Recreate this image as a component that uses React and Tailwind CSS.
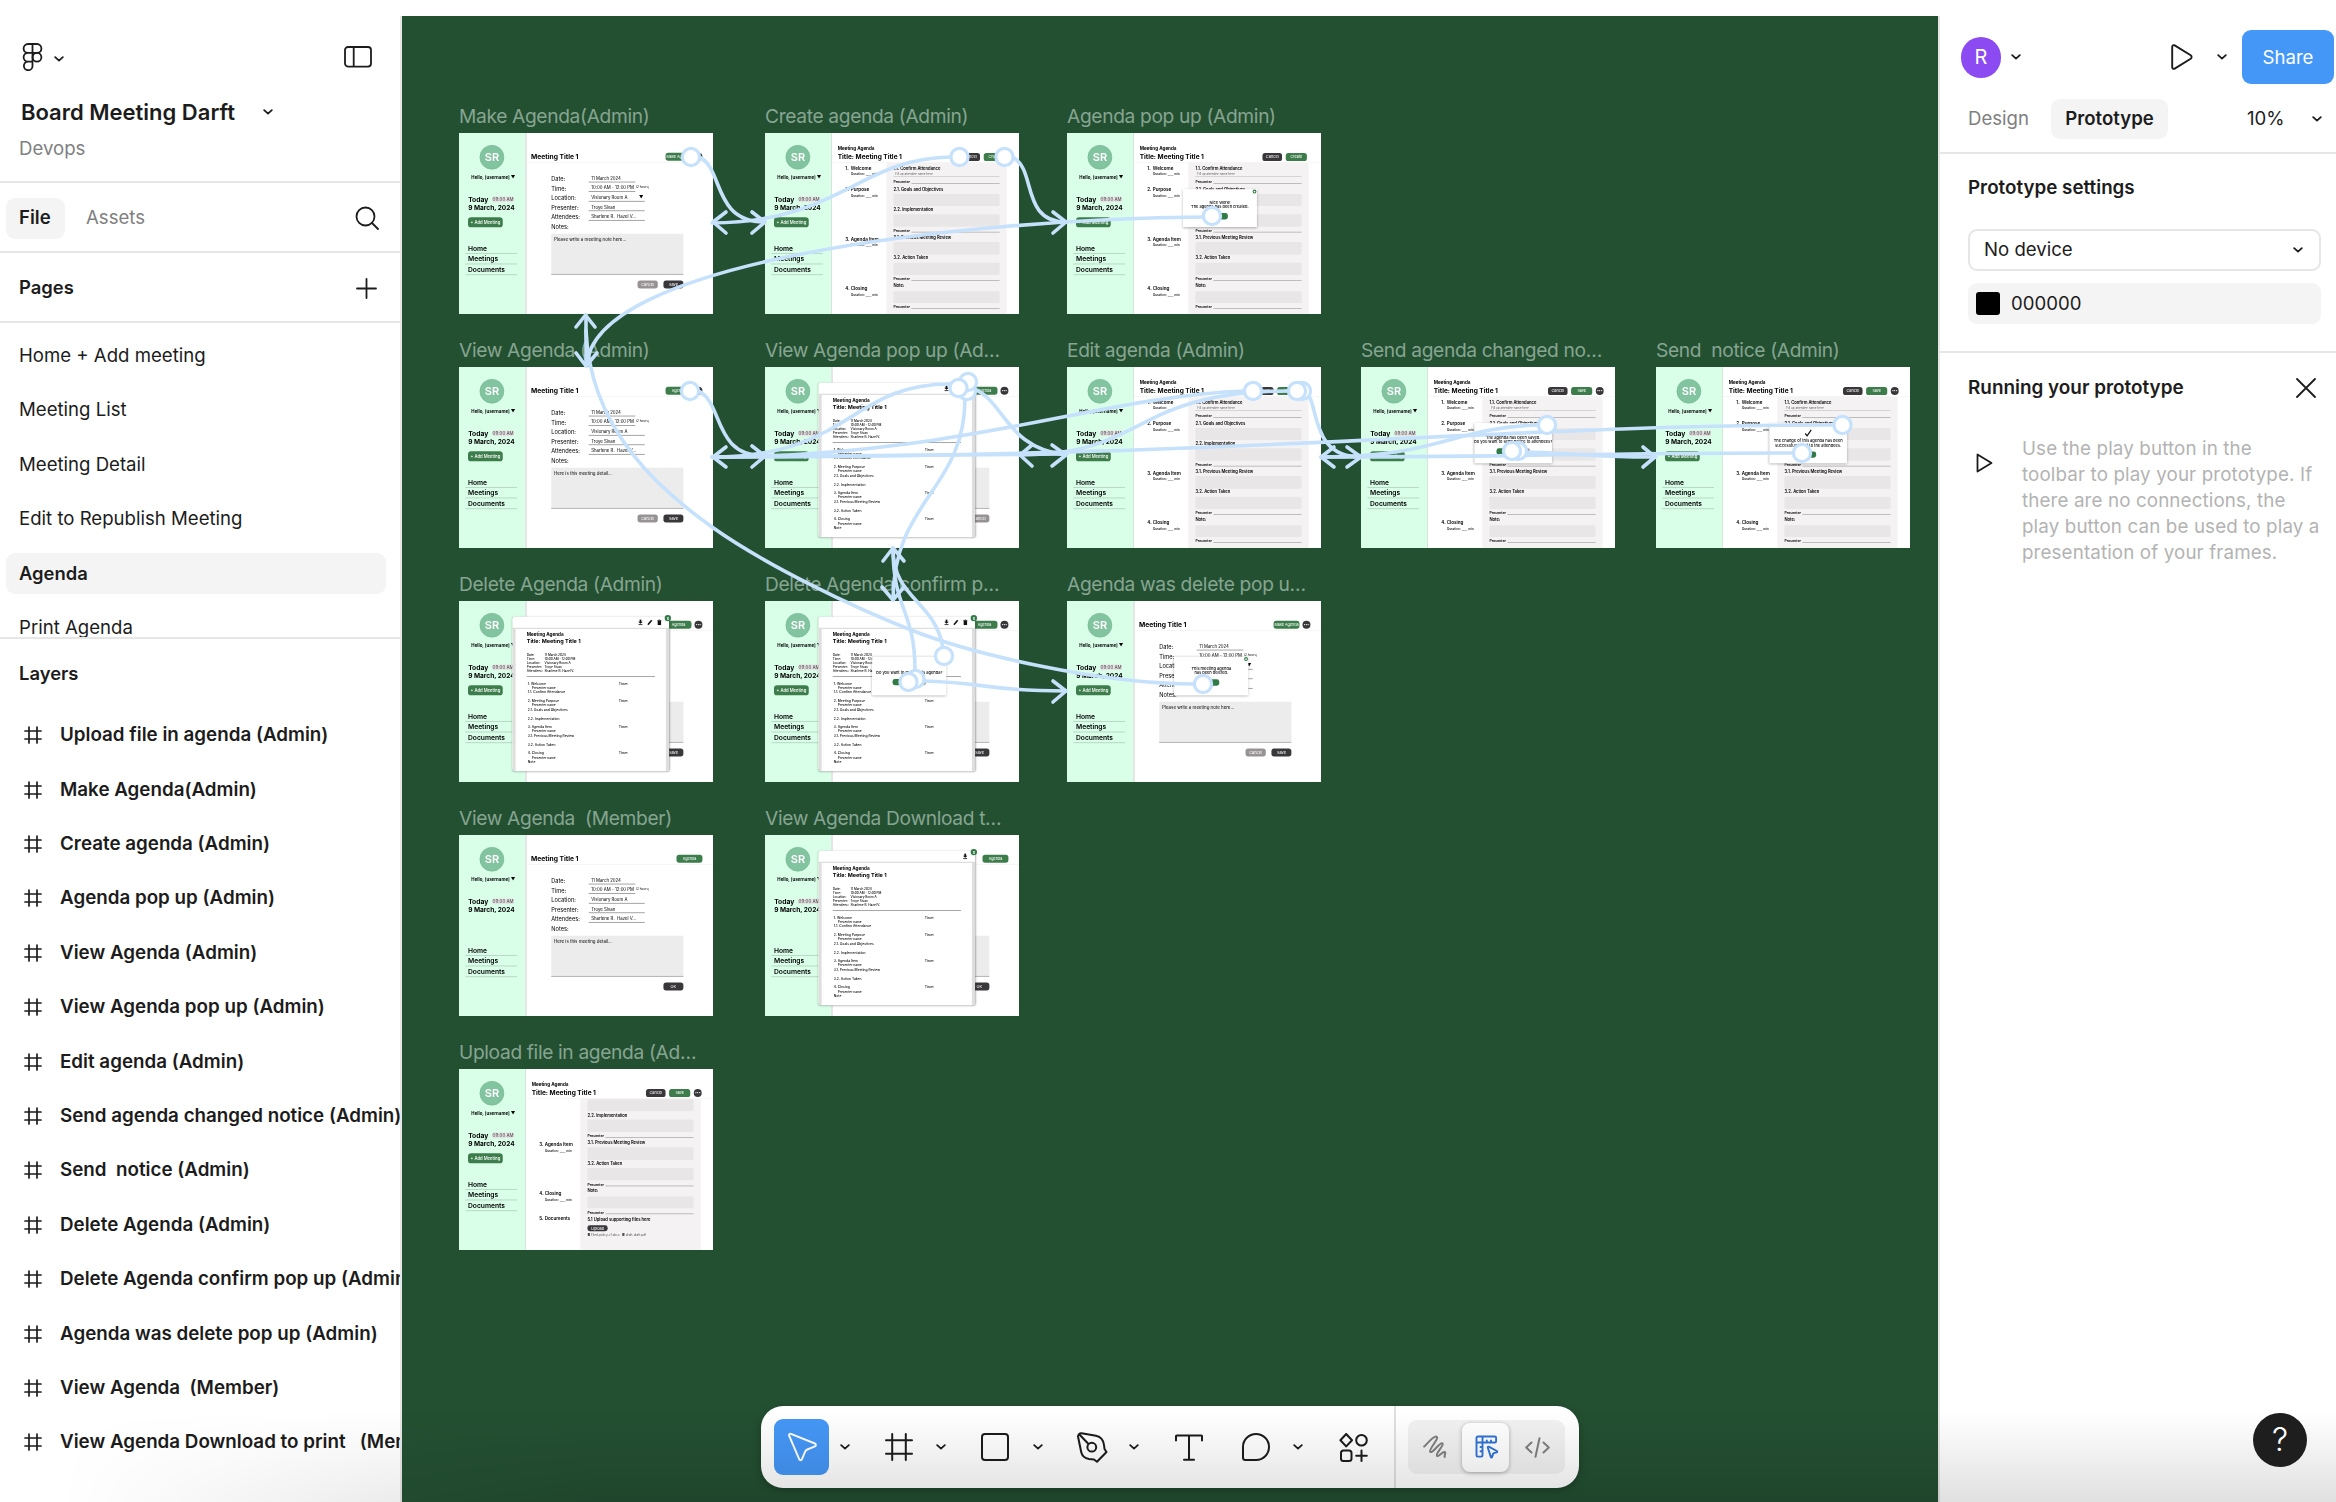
import React from "react";

function Chevron({ className = "" }) {
  return (
    <svg className={`h-[6px] w-[10px] shrink-0 ${className}`} viewBox="0 0 10 6" fill="none" stroke="currentColor" strokeWidth="1.8" strokeLinecap="round" strokeLinejoin="round">
      <path d="M1.2 1.2 5 4.6 8.8 1.2" />
    </svg>
  );
}

function FrameIcon({ className = "" }) {
  return (
    <svg className={className} viewBox="0 0 28 28" fill="none" stroke="currentColor" strokeWidth="2" strokeLinecap="round">
      <path d="M7.2 1v26M20.8 1v26M1 7.2h26M1 20.8h26" />
    </svg>
  );
}

function LayerIcon() {
  return (
    <svg className="h-[18px] w-[18px] shrink-0" viewBox="0 0 18 18" fill="none" stroke="currentColor" strokeWidth="1.7" strokeLinecap="round">
      <path d="M5 1v16M13 1v16M1 5h16M1 13h16" />
    </svg>
  );
}

/* ---------- Left panel ---------- */

const PAGES = ["Home + Add meeting", "Meeting List", "Meeting Detail", "Edit to Republish Meeting", "Agenda", "Print Agenda"];
const LAYERS = [
  "Upload file in agenda (Admin)",
  "Make Agenda(Admin)",
  "Create agenda (Admin)",
  "Agenda pop up (Admin)",
  "View Agenda (Admin)",
  "View Agenda pop up (Admin)",
  "Edit agenda (Admin)",
  "Send agenda changed notice (Admin)",
  "Send  notice (Admin)",
  "Delete Agenda (Admin)",
  "Delete Agenda confirm pop up (Admin)",
  "Agenda was delete pop up (Admin)",
  "View Agenda  (Member)",
  "View Agenda Download to print   (Member)",
];

function LeftPanel() {
  return (
    <aside className="flex w-[402px] shrink-0 flex-col overflow-hidden border-r-2 border-[#e6e6e6] bg-white">
      <header className="h-[167px] shrink-0 border-b-2 border-[#e6e6e6]">
        <div className="flex h-[81px] items-center pr-7 pl-[22px]">
          <svg className="h-[28px] w-[21px]" viewBox="0 0 21 28" fill="none" stroke="currentColor" strokeWidth="1.8">
            <path d="M10.5 1H6a4.4 4.4 0 0 0 0 8.8h4.5zM10.5 1H15a4.4 4.4 0 0 1 0 8.8h-4.5zM10.5 9.8H6a4.4 4.4 0 0 0 0 8.8h4.5zM6 18.6a4.3 4.3 0 1 0 4.5 4.3v-4.3z" />
            <circle cx="15" cy="14.2" r="4.4" />
          </svg>
          <Chevron className="mt-1 ml-[11px]" />
          <svg className="ml-auto h-[22px] w-[28px]" viewBox="0 0 28 22" fill="none" stroke="currentColor" strokeWidth="1.8">
            <rect x="1" y="1" width="26" height="19.6" rx="3" />
            <path d="M9.7 1v19.6" />
          </svg>
        </div>
        <div className="flex h-[30px] items-center pl-[21px]">
          <span className="w-[242px] text-[22px] font-semibold">Board Meeting Darft</span>
          <Chevron />
        </div>
        <div className="mt-[7px] pl-[19px] leading-[28px] text-[#808080]">Devops</div>
      </header>
      <div className="flex h-[70px] shrink-0 items-center border-b-2 border-[#e6e6e6] pt-[2px] pr-[21px] pl-[6px]">
        <span className="flex h-[41px] w-[59px] items-center rounded-[9px] bg-[#f4f4f4] pl-[13px] font-semibold">File</span>
        <span className="ml-[21px] text-[#808080]">Assets</span>
        <svg className="ml-auto h-[24px] w-[24px]" viewBox="0 0 24 24" fill="none" stroke="currentColor" strokeWidth="1.8" strokeLinecap="round">
          <circle cx="10.5" cy="10.5" r="9" />
          <path d="m17 17 6 6" />
        </svg>
      </div>
      <div className="flex h-[70px] shrink-0 items-center border-b-2 border-[#e6e6e6] pt-[2px] pr-[23px] pl-[19px]">
        <span className="text-[18.4px] font-semibold">Pages</span>
        <svg className="ml-auto h-[21px] w-[21px]" viewBox="0 0 21 21" fill="none" stroke="currentColor" strokeWidth="1.8" strokeLinecap="round">
          <path d="M10.5 1v19M1 10.5h19" />
        </svg>
      </div>
      <div className="h-[316px] shrink-0 overflow-hidden border-b-2 border-[#e6e6e6] pt-[6px] pl-[6px]">
        {PAGES.map((p) => (
          <div key={p} className="flex h-[54.3px] items-center">
            <div className={p === "Agenda" ? "flex h-[41px] w-[380px] items-center rounded-[9px] bg-[#f4f4f4] pl-[13px] text-[18.4px] font-semibold" : "flex h-[41px] w-[380px] items-center pl-[13px]"}>{p}</div>
          </div>
        ))}
      </div>
      <div className="flex h-[69px] shrink-0 items-center pl-[19px] text-[18.4px] font-semibold">Layers</div>
      <div className="flex-1 overflow-hidden">
        {LAYERS.map((l) => (
          <div key={l} className="flex h-[54.42px] items-center pl-[24px] text-[18.8px] font-semibold whitespace-pre">
            <LayerIcon />
            <span className="ml-[18px]">{l}</span>
          </div>
        ))}
      </div>
    </aside>
  );
}

/* ---------- Prototype frames, drawn at 1440 x 1024 ---------- */

const BTN = {
  green: "flex h-[45px] items-center justify-center rounded-[15px] bg-[#3d7d4b] text-[21px] text-white whitespace-nowrap",
  dark: "flex h-[45px] items-center justify-center rounded-[15px] bg-[#39373a] text-[22px] text-white",
  grey: "flex h-[45px] items-center justify-center rounded-[15px] bg-[#979394] text-[22px] text-white",
};

function Dot() {
  return <span className="flex h-[45px] w-[45px] items-center justify-center rounded-full bg-[#39373a] text-[22px] font-bold text-white">•••</span>;
}

function Side({ add = true }) {
  return (
    <div className="h-full w-[376px] shrink-0 bg-[#daffe9]">
      <div className="mt-[68px] ml-[117px] flex h-[139px] w-[139px] items-center justify-center rounded-full border-3 border-[#6fb48c] bg-[#83c4a0] text-[62px] font-semibold text-white">SR</div>
      <div className="mt-[26px] ml-[70px] h-[40px] text-[25px] leading-[40px] font-bold whitespace-nowrap">Hello, [username] ▼</div>
      <div className="mt-[80px] ml-[52px] flex h-[46px] items-center text-[38px] font-bold">
        Today
        <span className="ml-[22px] flex h-[32px] w-[124px] items-center justify-center rounded-[10px] bg-[#e4e4e4] text-[25px] font-medium text-[#5b5356]">09:00 AM</span>
      </div>
      <div className="ml-[52px] h-[46px] text-[37px] leading-[46px] font-bold whitespace-nowrap">9 March, 2024</div>
      <div className={add ? "mt-[33px] ml-[51px] flex h-[57px] w-[197px] items-center justify-center rounded-[18px] bg-[#3d7d4b] text-[24px] font-medium text-white" : "invisible mt-[33px] h-[57px]"}>+ Add Meeting</div>
      <div className="mt-[89px] ml-[36px] w-[293px]">
        {["Home", "Meetings", "Documents"].map((n) => (
          <div key={n} className="h-[60.5px] border-b-5 border-[#b3d3c0] pl-[15px] text-[38px] leading-[58px] font-semibold">{n}</div>
        ))}
      </div>
    </div>
  );
}

function Meeting({ add, button = "Agenda", dot = true, note = "Here is this meeting detail...", arrow = false, actions = "both" }) {
  const rows = [
    ["Date:", "11 March 2024"],
    ["Time:", "10:00 AM - 12:00 PM"],
    ["Location:", "Visionary Room A"],
    ["Presenter:", "Troye Sivan"],
    ["Attendees:", "Sharlene R.  Hazel V..."],
  ];
  return (
    <div className="flex h-full">
      <Side add={add} />
      <div className="flex-1 border-l-8 border-[#dcdcdc]">
        <div className="flex h-[170px] items-center border-b-3 border-[#f0f0f0] pt-[102px] pr-[60px] pl-[24px]">
          <span className="text-[38px] font-bold">Meeting Title 1</span>
          <span className={`${BTN.green} ml-auto w-[147px]`}>{button}</span>
          {dot && <span className="ml-[17px]"><Dot /></span>}
        </div>
        <div className="mt-[64px] ml-[139px] w-[749px]">
          {rows.map(([k, v], i) => (
            <div key={k} className="flex h-[54.3px] items-center">
              <span className="w-[212px] text-[32px]">{k}</span>
              <span className={i < 2 ? "mt-[2px] flex h-[36px] w-[265px] items-start border-b-4 border-[#808080] pl-[15px] text-[24.5px] leading-[26px] whitespace-pre" : "mt-[2px] flex h-[36px] w-[318px] items-start border-b-4 border-[#808080] pl-[15px] text-[24.5px] leading-[26px] whitespace-pre"}>
                {v}
                {arrow && i === 2 && <span className="mr-2 ml-auto">▼</span>}
              </span>
              {i === 1 && <span className="mb-[18px] ml-[3px] text-[17px]">(2 hours)</span>}
            </div>
          ))}
          <div className="h-[54px] text-[32px] leading-[54px]">Notes:</div>
          <div className="mt-[12px] h-[232px] border-b-4 border-[#999] bg-[#ececec] pt-[16px] pl-[16px] text-[25px]">{note}</div>
          <div className="mt-[33px] flex justify-end gap-[32px]">
            {actions === "both" ? (
              <>
                <span className={`${BTN.grey} w-[115px]`}>Cancel</span>
                <span className={`${BTN.dark} w-[113px]`}>Save</span>
              </>
            ) : (
              <span className={actions === "Cancel" ? `${BTN.grey} w-[115px]` : `${BTN.dark} w-[113px]`}>{actions}</span>
            )}
          </div>
        </div>
      </div>
    </div>
  );
}

function Presenter({ className }) {
  return (
    <div className={`flex h-[30px] items-end text-[20px] font-semibold ${className}`}>
      Presenter
      <span className="mb-[5px] ml-2 flex-1 border-b-4 border-[#a8a6a7]" />
    </div>
  );
}

function AgendaDoc({ save = false, upload = false }) {
  const item = (n, t, cls, sub = true) => (
    <div className={`ml-[75px] h-[76px] ${cls}`}>
      <div className="flex h-[40px] items-center text-[26px] font-semibold"><span className="w-[31px]">{n}.</span>{t}</div>
      {sub && <div className="ml-[32px] h-[36px] text-[18px] leading-[32px] font-medium whitespace-nowrap">Duration: ____ min</div>}
    </div>
  );
  const head = "h-[30px] text-[23.5px] leading-[30px] font-semibold whitespace-nowrap";
  return (
    <div className="flex h-full">
      <Side />
      <div className="flex h-full flex-1 flex-col border-l-4 border-[#cfd8d3]">
        <div className="flex h-[168px] shrink-0 items-end border-b-3 border-[#f0f0f0] pr-[64px] pb-[6px] pl-[32px]">
          <div className="font-bold whitespace-nowrap">
            <div className="h-[42px] text-[26px] leading-[38px]">Meeting Agenda</div>
            <div className="h-[46px] text-[37px] leading-[42px]">Title: Meeting Title 1</div>
          </div>
          <div className={save ? "ml-auto flex items-center gap-[20px]" : "mr-[16px] ml-auto flex items-center gap-[21px]"}>
            <span className={`${BTN.dark} w-[111px]`}>Cancel</span>
            <span className={`${BTN.green} w-[120px]`}>{save ? "Save" : "Create"}</span>
            {save && <Dot />}
          </div>
        </div>
        <div className="flex min-h-0 flex-1">
          <div className="w-[308px] overflow-hidden">
            <div className={upload ? "-mt-[174px] pt-px" : "pt-px"}>
              {item(1, "Welcome", "mt-[9px]")}
              {item(2, "Purpose", upload ? "invisible mt-[45px]" : "mt-[45px]")}
              {item(3, "Agenda Item", "mt-[206px]")}
              {item(4, "Closing", "mt-[203px]")}
              {upload && item(5, "Documents", "mt-[64px]", false)}
            </div>
          </div>
          <div className="w-[682px] overflow-hidden bg-[#f4f2f3] px-[40px]">
            <div className={upload ? "-mt-[174px] pt-px" : "pt-px"}>
              <div className={`${head} mt-[18px]`}>1.1. Confirm Attendance</div>
              <div className="mt-[2px] h-[30px] border-b-3 border-[#bbb] pl-[10px] text-[17px] text-[#666]">Fill up attendee name here</div>
              <Presenter className="mt-[15px]" />
              <div className={`${head} mt-[10px]`}>2.1. Goals and Objectives</div>
              <div className="mt-[12px] h-[68px] rounded-lg bg-[#e8e6e7]" />
              <div className={`${head} mt-[8px]`}>2.2. Implementation</div>
              <div className="mt-[9px] h-[70px] rounded-lg bg-[#e8e6e7]" />
              <Presenter className="mt-[8px]" />
              <div className={`${head} mt-[10px]`}>3.1. Previous Meeting Review</div>
              <div className="mt-[9px] h-[72px] rounded-lg bg-[#e8e6e7]" />
              <div className={`${head} mt-[4px]`}>3.2. Action Taken</div>
              <div className="mt-[11px] h-[70px] rounded-lg bg-[#e8e6e7]" />
              <Presenter className="mt-[9px]" />
              <div className={`${head} mt-[7px]`}>Note:</div>
              <div className="mt-[16px] h-[67px] rounded-lg bg-[#e8e6e7]" />
              <Presenter className="mt-[8px]" />
              {upload && (
                <>
                  <div className={`${head} mt-[8px]`}>5.1 Upload supporting files here</div>
                  <div className="mt-[20px] flex h-[34px] w-[115px] items-center justify-center rounded-[14px] bg-[#39373a] text-[22px] text-white">Upload</div>
                  <div className="mt-[10px] text-[17px] whitespace-pre text-[#555]">■ Filed-policy-v1.docx   ■ draft-draft.pdf</div>
                </>
              )}
            </div>
          </div>
        </div>
      </div>
    </div>
  );
}

/* [text, indented, has a time slot]; null is a blank line */
const PAPER_ROWS = [
  ["1. Welcome", false, true], ["Presenter name", true], ["1.1. Confirm Attendance"], null,
  ["2. Meeting Purpose", false, true], ["Presenter name", true], ["2.1. Goals and Objectives"], null,
  ["2.2. Implementation"], null,
  ["3. Agenda Item", false, true], ["Presenter name", true], ["3.1. Previous Meeting Review"], null,
  ["3.2. Action Taken"], null,
  ["4. Closing", false, true], ["Presenter name", true], ["Note"],
];

function Paper({ tools = 3 }) {
  const details = [
    ["Date:", "11 March 2024"], ["Time:", "10:00 AM - 12:00 PM"], ["Location:", "Visionary Room A"],
    ["Presenter:", "Troye Sivan"], ["Attendees:", "Sharlene R. Hazel V."],
  ];
  return (
    <div className="absolute top-[89px] left-[303px] h-[876px] w-[888px] rounded-[14px] bg-white shadow-[0_3px_10px_rgba(0,0,0,0.3)]">
      <div className="absolute -top-[10px] -right-[11px] flex h-[36px] w-[36px] items-center justify-center rounded-full bg-[#2f7a45] text-[22px] font-bold text-white">x</div>
      <div className="flex h-[68px] items-center justify-end gap-[24px] border-b-5 border-[#d0d0d0] pr-[42px]">
        <svg className="h-[34px] w-[28px]" viewBox="0 0 28 34"><path d="M9 1h10v12h8L14 25 1 13h8zM3 28h22v5H3z" fill="#111" /></svg>
        {tools === 3 && (
          <>
            <svg className="h-[34px] w-[32px]" viewBox="0 0 32 34"><path d="M1 33l3-9L22 3l7 5-19 22z" fill="#111" /></svg>
            <svg className="h-[34px] w-[26px]" viewBox="0 0 26 34"><path d="M1 4h24v4H1zM3 10h20v23H3zM9 1h8v3H9z" fill="#111" /></svg>
          </>
        )}
      </div>
      <div className="h-[808px] rounded-b-[14px] border-x-[19px] border-[#dedede] pt-[10px] pl-[62px]">
        <div className="h-[40px] text-[26px] leading-[40px] font-bold">Meeting Agenda</div>
        <div className="h-[40px] text-[31px] leading-[40px] font-bold">Title: Meeting Title 1</div>
        <div className="mt-[46px]">
          {details.map(([k, v]) => (
            <div key={k} className="flex h-[22.7px] items-center text-[17.5px] font-medium"><span className="w-[101px]">{k}</span>{v}</div>
          ))}
        </div>
        <div className="mt-[20px] w-[727px] border-b-5 border-[#999]" />
        <div className="mt-[25px] ml-[6px]">
          {PAPER_ROWS.map((r, i) => (
            <div key={i} className="flex h-[24.6px] items-center text-[19px] leading-none font-medium">
              {r && (
                <>
                  <span className={r[1] ? "w-[515px] pl-[22px] text-[18px]" : "w-[515px]"}>{r[0]}</span>
                  {r[2] && <span className="text-[20px]">Time:</span>}
                </>
              )}
            </div>
          ))}
        </div>
      </div>
    </div>
  );
}

function Popup({ className, lines, check = false, close = false, buttons = 1 }) {
  return (
    <div className={`absolute flex flex-col items-center justify-center bg-white text-[22.5px] leading-[24px] font-medium whitespace-nowrap shadow-[0_3px_14px_rgba(0,0,0,0.3)] ${className}`}>
      {close && <span className="absolute top-[2px] right-[2px] h-[22px] w-[22px] rounded-full border-6 border-[#2f7a45] bg-white" />}
      {check && (
        <svg className="mb-[10px] h-[46px] w-[46px]" viewBox="0 0 46 46" fill="none" stroke="#111" strokeWidth="7"><path d="M6 26l11 13L40 5" /></svg>
      )}
      {lines.map((l) => <div key={l}>{l}</div>)}
      <div className="mt-[24px] flex gap-[20px]">
        <span className="h-[36px] w-[90px] rounded-[14px] bg-[#2f7a45]" />
        {buttons === 2 && <span className="h-[36px] w-[80px] rounded-[14px] bg-[#979394]" />}
      </div>
    </div>
  );
}

const FRAMES = [
  { at: "left-[57px] top-[117px]", name: "Make Agenda(Admin)", body: <Meeting button="Make Agenda" note="Please write a meeting note here..." arrow /> },
  { at: "left-[363px] top-[117px]", name: "Create agenda (Admin)", body: <AgendaDoc /> },
  { at: "left-[665px] top-[117px]", name: "Agenda pop up (Admin)", body: <><AgendaDoc /><Popup close className="top-[319px] left-[658px] h-[214px] w-[418px] pt-[20px]" lines={["Nice Work!", "The agenda has been created."]} /></> },
  { at: "left-[57px] top-[351px]", name: "View Agenda (Admin)", body: <Meeting /> },
  { at: "left-[363px] top-[351px]", name: "View Agenda pop up (Admin)", body: <><Meeting actions="Cancel" /><Paper /></> },
  { at: "left-[665px] top-[351px]", name: "Edit agenda (Admin)", body: <AgendaDoc save /> },
  { at: "left-[959px] top-[351px]", name: "Send agenda changed notice (Admin)", body: <><AgendaDoc save /><Popup buttons={2} className="top-[319px] left-[643px] h-[227px] w-[439px] pt-[20px]" lines={["The agenda has been saved.", "Do you want to send notice to attendees?"]} /></> },
  { at: "left-[1254px] top-[351px]", name: "Send  notice (Admin)", body: <><AgendaDoc save /><Popup check className="top-[319px] left-[643px] h-[227px] w-[439px]" lines={["The change of this agenda has been", "successfully sent to the attendees."]} /></> },
  { at: "left-[57px] top-[585px]", name: "Delete Agenda (Admin)", body: <><Meeting actions="Save" /><Paper /></> },
  { at: "left-[363px] top-[585px]", name: "Delete Agenda confirm pop up (Admin)", body: <><Meeting actions="Save" /><Paper /><Popup buttons={2} className="top-[316px] left-[608px] h-[219px] w-[420px] pt-[20px]" lines={["Do you want to delete this agenda?"]} /></> },
  { at: "left-[665px] top-[585px]", name: "Agenda was delete pop up (Admin)", body: <><Meeting button="Make Agenda" note="Please write a meeting note here..." arrow /><Popup close className="top-[316px] left-[608px] h-[219px] w-[420px]" lines={["This meeting agenda", "has been deleted."]} /></> },
  { at: "left-[57px] top-[819px]", name: "View Agenda  (Member)", body: <Meeting add={false} dot={false} actions="OK" /> },
  { at: "left-[363px] top-[819px]", name: "View Agenda Download to print   (Member)", body: <><Meeting add={false} dot={false} actions="OK" /><Paper tools={1} /></> },
  { at: "left-[57px] top-[1053px]", name: "Upload file in agenda (Admin)", body: <AgendaDoc save upload /> },
];

/* ---------- Prototype connections ---------- */

const WIRES = [
  "M699 157C724 168 712 222 765 222",
  "M951 157C860 158 840 222 712 223",
  "M1012 157C1037 168 1020 222 1066 222",
  "M1204 217C960 219 590 262 587 366",
  "M586 315V366",
  "M586 330C590 430 660 490 712 527S850 606 911 630S1100 684 1195 684",
  "M698 391C724 402 712 456 765 456",
  "M950 384C850 384 850 457 712 457",
  "M972 388C1005 400 1005 448 1066 455",
  "M1245 391C1100 396 960 457 712 457",
  "M1290 391C1130 391 1150 455 1019 455",
  "M1305 392C1320 400 1308 457 1361 457",
  "M1539 425C1450 428 1440 457 1321 457",
  "M1834 425C1500 425 1250 457 712 457",
  "M1067 454L712 457",
  "M1792 453C1600 453 1500 457 1321 457",
  "M1521 452C1560 452 1580 457 1656 457",
  "M965 398C965 490 893 500 893 600",
  "M943 648C935 600 893 600 893 548",
  "M915 670C915 610 893 610 893 548",
  "M923 681C980 682 990 691 1066 691",
];
const HEADS = [
  "M752 212L765 222L752 233", "M726 212L713 222L726 233", "M1053 212L1066 222L1053 233",
  "M576 327L585.5 315L595 327", "M576 353L586 366L597 353",
  "M752 446L765 456L752 467", "M726 447L713 457L726 467",
  "M1032 445L1020 455L1032 466", "M1052 445L1066 455L1052 466",
  "M1334 447L1321 457L1334 467", "M1347 447L1361 457L1347 467", "M1643 447L1655 457L1643 467",
  "M883 561L893 548L904 561", "M882 587L893 600L904 587", "M1053 681L1066 691L1053 702",
];
const NODES = [
  [691, 157], [959.5, 157], [1004.5, 157], [1212, 216], [690, 391], [967, 391], [968, 382], [958.5, 388],
  [1253, 391], [1302, 391], [1297, 391], [1547, 425], [1518, 451], [1512, 451], [1842.5, 425], [1802, 453],
  [944, 656], [915.5, 679], [908.5, 682], [1203, 684],
];

function Wires() {
  return (
    <svg className="pointer-events-none absolute top-0 left-0 h-full w-full" viewBox="402 16 1536 1486" fill="none" stroke="#c6e1fb" strokeWidth="3.6" strokeLinecap="round" strokeLinejoin="round">
      {WIRES.map((d) => <path key={d} d={d} />)}
      {HEADS.map((d) => <path key={d} d={d} />)}
      {NODES.map(([x, y]) => <circle key={`${x}-${y}`} cx={x} cy={y} r="8.6" fill="white" strokeWidth="3.2" />)}
    </svg>
  );
}

/* ---------- Toolbar ---------- */

function Toolbar() {
  return (
    <div className="absolute top-[1390px] left-[359px] flex h-[82px] w-[818px] items-center overflow-hidden rounded-[22px] bg-white pl-[13px] shadow-[0_2px_8px_rgba(0,0,0,0.25)] *:shrink-0">
      <span className="flex h-[56px] w-[55px] items-center justify-center rounded-[9px] bg-[#4597f7] text-white">
        <svg className="h-[32px] w-[32px]" viewBox="0 0 32 32" fill="none" stroke="currentColor" strokeWidth="2" strokeLinejoin="round">
          <path d="M3.1 4.6c-.4-1.1.7-2.2 1.8-1.700l24 9.600c1.300.5 1.300 2.300 0 2.800l-7.600 3.200c-1 .4-1.700 1.100-2.200 2.100l-3.100 7.600c-.5 1.300-2.300 1.300-2.800 0z" />
        </svg>
      </span>
      <Chevron className="ml-[11px]" />
      <FrameIcon className="ml-[35px] h-[28px] w-[28px]" />
      <Chevron className="ml-[23px]" />
      <svg className="ml-[35px] h-[28px] w-[28px]" viewBox="0 0 28 28" fill="none" stroke="currentColor" strokeWidth="2"><rect x="1" y="1" width="26" height="26" rx="3" /></svg>
      <Chevron className="ml-[24px]" />
      <svg className="ml-[34px] h-[31px] w-[31px]" viewBox="0 0 31 31" fill="none" stroke="currentColor" strokeWidth="2" strokeLinecap="round" strokeLinejoin="round">
        <path d="M1 4.500C1 3 2.500 1 4.500 1.200L19 3.800C24 5 26.500 8.500 27 13L27.500 17L29.500 20L20 29.800L17 27.500L12 27C8 26.300 5 24 4.200 20ZM2.200 2.200l9.300 9.800" />
        <circle cx="14.800" cy="15.200" r="4.400" />
      </svg>
      <Chevron className="ml-[21px]" />
      <svg className="ml-[36px] h-[27px] w-[28px]" viewBox="0 0 28 27" fill="none" stroke="currentColor" strokeWidth="2" strokeLinecap="round" strokeLinejoin="round"><path d="M1 6.500V2.200A.8.8 0 0 1 1.800 1.400h24.400a.8.8 0 0 1 .8.8v4.300M14 1.400v24.400M9 25.800h10" /></svg>
      <svg className="ml-[39px] h-[28px] w-[28px]" viewBox="0 0 28 28" fill="none" stroke="currentColor" strokeWidth="2"><path d="M14 1a13 13 0 1 1 0 26H3.500A2.500 2.500 0 0 1 1 24.500V14A13 13 0 0 1 14 1z" /></svg>
      <Chevron className="ml-[23px]" />
      <svg className="ml-[36px] h-[29px] w-[29px]" viewBox="0 0 29 29" fill="none" stroke="currentColor" strokeWidth="2" strokeLinecap="round" strokeLinejoin="round">
        <path d="M7.200 1 13 7.200 7.200 13.400 1.400 7.200zM22.500 17.500v10.500M17.200 22.700h10.600" />
        <circle cx="22.500" cy="7.200" r="5.300" />
        <rect x="2" y="17.500" width="10.500" height="10.500" rx="2.500" />
      </svg>
      <div className="ml-[26px] h-full w-[2px] bg-[#e0e0e0]" />
      <div className="ml-[12px] flex h-[54px] w-[157px] items-center rounded-[9px] bg-[#f2f2f2] pl-[15px] text-[#808080] *:shrink-0">
        <svg className="h-[24px] w-[24px]" viewBox="0 0 24 24" fill="none" stroke="currentColor" strokeWidth="2" strokeLinecap="round"><path d="M1.200 11.500C5 8 10.500.500 13.500 1.600c3.500 1.400-7.800 12.200-6.300 15C9 19.500 16.500 7.500 19 8.200c3.500 1-7 10.300-5 12.600 1.500 1.700 5.500-4.800 7.700-3.800 1.700.8-.7 2.700 0 5" /></svg>
        <span className="ml-[15px] flex h-[49px] w-[47px] items-center justify-center rounded-[8px] bg-white pl-[3px] text-[#2f74d8] shadow-[0_1px_4px_rgba(0,0,0,0.3)]">
          <svg className="h-[24px] w-[24px]" viewBox="0 0 24 24" fill="none" stroke="currentColor" strokeWidth="1.900" strokeLinejoin="round" strokeLinecap="round">
            <path d="M2.800 1.500h17a1.300 1.300 0 0 1 1.300 1.300v3.400a1.300 1.300 0 0 1-1.300 1.300H7.500v12.800a1.300 1.300 0 0 1-1.300 1.300H2.800a1.300 1.300 0 0 1-1.300-1.300V2.800a1.300 1.300 0 0 1 1.300-1.300zM7.500 7.500V1.800M7.500 7.500H1.800M11.800 7.200V5.500M16 7.200V5.500M7.200 12H5.500M7.200 16.200H5.500" />
            <path d="M12.800 12.600c-.2-.7.400-1.200 1-.9l8 4.300c.7.400.6 1.200-.1 1.400l-2.900.8c-.3.100-.6.400-.7.700l-1 3c-.2.700-1.100.700-1.300 0z" />
          </svg>
        </span>
        <svg className="ml-[16px] h-[21px] w-[25px]" viewBox="0 0 25 21" fill="none" stroke="currentColor" strokeWidth="2" strokeLinecap="round" strokeLinejoin="round"><path d="M6.500 5.500 1.200 10.500l5.300 5M18.500 5.500l5.300 5-5.300 5M14.500 1.200l-4 18.600" /></svg>
      </div>
    </div>
  );
}

/* ---------- Right panel ---------- */

function RightPanel() {
  return (
    <aside className="flex w-[398px] shrink-0 flex-col border-l-2 border-[#e6e6e6] bg-white">
      <div className="h-[138px] border-b-2 border-[#e6e6e6]">
        <div className="flex h-[82px] items-center pr-[2px] pl-[21px]">
          <span className="flex h-[41px] w-[40px] items-center justify-center rounded-full bg-[#8c4bf2] text-[20px] text-white">R</span>
          <Chevron className="ml-[10px]" />
          <svg className="ml-auto h-[26px] w-[22px]" viewBox="0 0 22 26" fill="none" stroke="currentColor" strokeWidth="1.900" strokeLinejoin="round"><path d="M1.200 3v20c0 1.500 1.300 2.300 2.500 1.600l16-9.900c1.200-.8 1.200-2.600 0-3.400l-16-9.900C2.500.7 1.200 1.500 1.200 3z" /></svg>
          <Chevron className="ml-[24px]" />
          <span className="ml-[15px] flex h-[54px] w-[92px] items-center justify-center rounded-[9px] bg-[#4597f7] pt-[2px] text-white">Share</span>
        </div>
        <div className="mt-px flex h-[40px] items-center pr-[14px] pl-[28px]">
          <span className="w-[83px] text-[#808080]">Design</span>
          <span className="flex h-[40px] w-[117px] items-center justify-center rounded-[9px] bg-[#f4f4f4] font-semibold">Prototype</span>
          <span className="ml-[79px]">10%</span>
          <Chevron className="ml-auto" />
        </div>
      </div>
      <div className="h-[199px] border-b-2 border-[#e6e6e6] pt-[14px] pr-[15px] pl-[28px]">
        <div className="h-[40px] text-[18.8px] leading-[40px] font-semibold">Prototype settings</div>
        <div className="mt-[21px] flex h-[42px] items-center justify-between rounded-[9px] border-2 border-[#e6e6e6] pr-[16px] pl-[14px]">No device<Chevron /></div>
        <div className="mt-[12px] flex h-[41px] items-center rounded-[9px] bg-[#f4f4f4] pl-[8px]">
          <span className="h-[23px] w-[24px] rounded-[3px] bg-black" />
          <span className="ml-[11px] pt-px">000000</span>
        </div>
      </div>
      <div className="flex h-[70px] items-center justify-between pr-[20px] pl-[28px]">
        <span className="text-[18.9px] font-semibold">Running your prototype</span>
        <svg className="h-[20px] w-[20px]" viewBox="0 0 20 20" fill="none" stroke="currentColor" strokeWidth="1.800" strokeLinecap="round"><path d="m1 1 18 18M19 1 1 19" /></svg>
      </div>
      <div className="flex pt-[13px] pl-[36px]">
        <svg className="mt-[17px] h-[20px] w-[17px]" viewBox="0 0 17 20" fill="none" stroke="currentColor" strokeWidth="1.800" strokeLinejoin="round"><path d="M1.500 1.500v17l14-8.500z" /></svg>
        <p className="ml-[29px] text-[18.8px] leading-[26px] tracking-[0.12px] whitespace-nowrap text-[#b3b3b3]">
          Use the play button in the<br />toolbar to play your prototype. If<br />there are no connections, the<br />play button can be used to play a<br />presentation of your frames.
        </p>
      </div>
    </aside>
  );
}

export default function App() {
  return (
    <div className="relative flex h-[1502px] w-[2336px] overflow-hidden bg-white pt-[16px] font-['Inter',sans-serif] text-[18.6px] text-[#1c1c1c]">
      <LeftPanel />
      <main className="relative h-[1486px] flex-1 overflow-hidden bg-[#245032]">
        {FRAMES.map((f) => (
          <div key={f.name} className={`absolute w-[254px] ${f.at}`}>
            <div className="absolute -top-[31px] left-0 w-[243px] truncate text-[19.2px] leading-[29px] tracking-[-0.35px] whitespace-pre text-[#86a591]">{f.name}</div>
            <div className="h-[181px] w-[254px] overflow-hidden">
              <div className="relative h-[1026px] w-[1440px] origin-top-left scale-[0.17639] overflow-hidden bg-white text-black">{f.body}</div>
            </div>
          </div>
        ))}
        <Wires />
        <Toolbar />
      </main>
      <RightPanel />
      <div className="pointer-events-none absolute bottom-0 left-0 h-[90px] w-full bg-linear-to-b from-transparent to-black/12 mask-[linear-gradient(to_right,transparent_60px,black_600px)]" />
      <div className="absolute right-[29px] bottom-[35px] flex h-[54px] w-[54px] items-center justify-center rounded-full bg-[#1e1e1e] text-[32px] font-light text-white">?</div>
    </div>
  );
}
